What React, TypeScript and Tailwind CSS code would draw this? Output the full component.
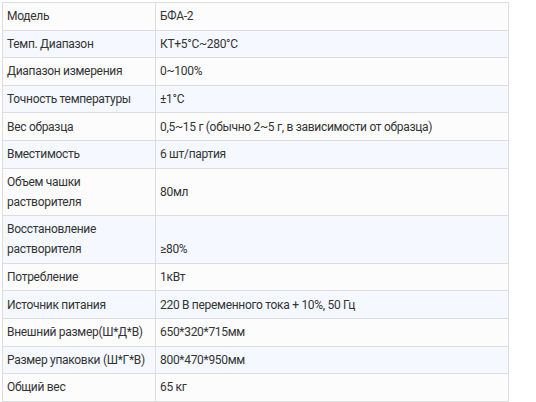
const rows: { label: string[]; value: string[] }[] = [
  { label: ["Модель"], value: ["БФА-2"] },
  { label: ["Темп. Диапазон"], value: ["КТ+5°C~280°C"] },
  { label: ["Диапазон измерения"], value: ["0~100%"] },
  { label: ["Точность температуры"], value: ["±1°C"] },
  { label: ["Вес образца"], value: ["0,5~15 г (обычно 2~5 г, в зависимости от образца)"] },
  { label: ["Вместимость"], value: ["6 шт/партия"] },
  { label: ["Объем чашки", "растворителя"], value: ["80мл"] },
  { label: ["Восстановление", "растворителя"], value: ["", "≥80%"] },
  { label: ["Потребление"], value: ["1кВт"] },
  { label: ["Источник питания"], value: ["220 В переменного тока + 10%, 50 Гц"] },
  { label: ["Внешний размер(Ш*Д*В)"], value: ["650*320*715мм"] },
  { label: ["Размер упаковки (Ш*Г*В)"], value: ["800*470*950мм"] },
  { label: ["Общий вес"], value: ["65 кг"] },
]

export default function App() {
  return (
    <div className="w-[536px] h-[402px] overflow-hidden bg-white pl-[2px] pt-[2px] font-['Roboto','Noto_Sans',sans-serif] text-[12px] leading-5 tracking-[-0.3px] text-[#333]">
      <table className="w-[507px] table-fixed border-collapse">
        <colgroup>
          <col className="w-[153px]" />
          <col />
        </colgroup>
        <tbody>
          {rows.map((r, i) => (
            <tr key={i} className={i % 2 === 1 ? "bg-[#f5f9ff]" : "bg-[#fcfcfc]"}>
              <td className="whitespace-nowrap border border-[#ddd] px-[4px] py-[3.3px] align-middle">
                {r.label.map((l, j) => (
                  <div key={j}>{l}</div>
                ))}
              </td>
              <td className="whitespace-nowrap border border-[#ddd] px-[4px] py-[3.3px] align-middle">
                {r.value.map((v, j) => (
                  <div key={j} className="h-5">{v}</div>
                ))}
              </td>
            </tr>
          ))}
        </tbody>
      </table>
    </div>
  )
}
